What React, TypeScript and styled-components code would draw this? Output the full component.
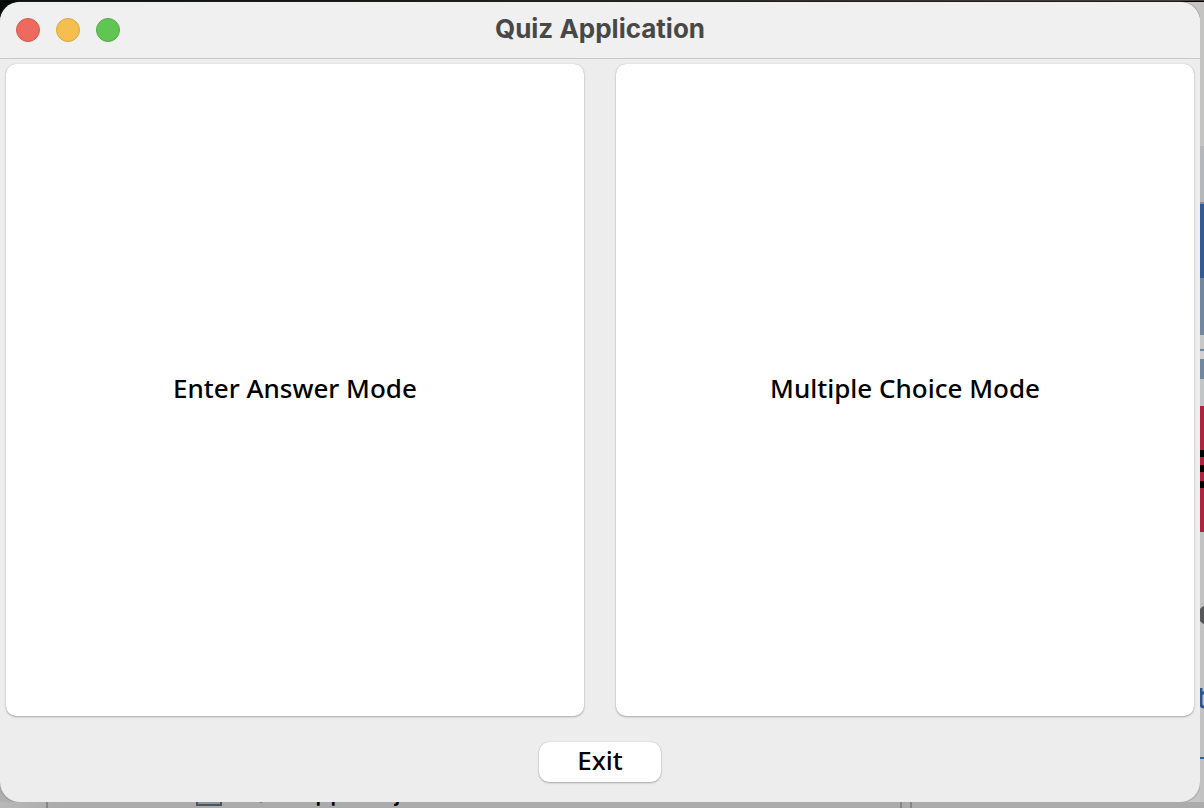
import React from "react";
import styled, { createGlobalStyle } from "styled-components";

const GlobalStyle = createGlobalStyle`
  *, *::before, *::after { box-sizing: border-box; }
  body { margin: 0; background: #b0b0b0; }
`;

const Desktop = styled.div`
  display: grid;
  grid-template-columns: minmax(0, 1fr) 4px;
  grid-template-rows: 2px minmax(0, 1fr) 6px;
  height: 100vh;
  overflow: hidden;
  background: linear-gradient(to bottom, #020b0a 0 40px, #bcbcbc 200px, #b0b0b0);
`;

const MenuBarEdge = styled.div`
  grid-column: 1 / -1;
  background: linear-gradient(to right, #03100f, #14150e 30%, #4b4236);
  border-bottom: 1px solid #000000;
`;

const WindowCell = styled.div`
  display: flex;
  min-width: 0;
  background: linear-gradient(to right, transparent 50%, #c6c7c4 50%);
`;

const Window = styled.main`
  flex: 1;
  display: flex;
  flex-direction: column;
  min-width: 0;
  overflow: hidden;
  border-radius: 20px;
  background: #ededed;
  box-shadow: 0 0 2px 0 #6e6e6e;
`;

const TitleBar = styled.header`
  display: grid;
  grid-template-columns: 1fr auto 1fr;
  align-items: center;
  height: 57px;
  padding: 0 16px;
  background: #f0f0f0;
  border-bottom: 1px solid #c8c8c8;
`;

const Controls = styled.div`
  display: flex;
  gap: 16px;
`;

const ControlButton = styled.button<{ $fill: string; $edge: string }>`
  width: 24px;
  height: 24px;
  padding: 0;
  border: 1px solid ${(p) => p.$edge};
  border-radius: 50%;
  background: ${(p) => p.$fill};
`;

const Title = styled.h1`
  margin: 0;
  padding-bottom: 2px;
  font: 700 26px/32px Inter, sans-serif;
  color: #484848;
`;

const Modes = styled.div`
  flex: 1;
  display: grid;
  grid-template-columns: 1fr 1fr;
  gap: 32px;
  padding: 5px 6px 0;
`;

const PushButton = styled.button`
  padding: 0 38px 4px;
  border: 0;
  border-radius: 10px;
  background: #ffffff;
  box-shadow: 0 0 1px 0 #a8a8a8, 0 1px 2px 0 #a8a8a8;
  color: #000000;
  font: 500 26px/36px "Noto Sans", sans-serif;
`;

const Footer = styled.footer`
  display: flex;
  justify-content: center;
  padding: 26px 0 20px;
`;

const SideApp = styled.div`
  display: flex;
  flex-direction: column;
  overflow: hidden;
`;

const Band = styled.div<{ $size: number; $color: string }>`
  flex: 0 0 ${(p) => p.$size}px;
  background: ${(p) => p.$color};
`;

const Drawing = styled.svg`
  display: block;
  flex: none;
`;

const FileRow = styled.div`
  grid-column: 1 / -1;
  display: flex;
  align-items: flex-end;
  overflow: hidden;
  padding-left: 46px;
  background: linear-gradient(to right, #b8b8b8, #ababab 60px);
`;

const FilePane = styled.div`
  flex: 0 0 856px;
  display: flex;
  align-items: flex-end;
  height: 6px;
  padding-left: 148px;
  border: solid #858585;
  border-width: 0 2px;
`;

const FileName = styled.span`
  padding-left: 22px;
  font: 500 24px/30px Inter, sans-serif;
  color: #000000;
  white-space: nowrap;
`;

const Splitter = styled.div`
  flex: 0 0 10px;
  height: 6px;
  border-right: 2px solid #858585;
`;

const upperBands: [number, string][] = [
  [144, "#c4c5c2"],
  [56, "#b4b7bc"],
  [2, "#8e8e8e"],
  [74, "#345a92"],
  [57, "#72869e"],
  [14, "#c8c8c8"],
  [2, "#72869e"],
  [8, "#d0d0d0"],
  [20, "#72869e"],
  [27, "#c2c5c6"],
  [44, "#ac2440"],
  [7, "#000000"],
  [8, "#ac2440"],
  [7, "#000000"],
  [9, "#ac2440"],
  [7, "#000000"],
  [44, "#ac2440"],
];

export default function App() {
  return (
    <>
      <GlobalStyle />
      <Desktop>
        <MenuBarEdge />
        <WindowCell>
          <Window>
            <TitleBar>
              <Controls>
                <ControlButton aria-label="Close" $fill="#ec6a5e" $edge="#d8584c" />
                <ControlButton aria-label="Minimize" $fill="#f4bf4f" $edge="#dba73c" />
                <ControlButton aria-label="Zoom" $fill="#61c554" $edge="#4fae43" />
              </Controls>
              <Title>Quiz Application</Title>
            </TitleBar>
            <Modes>
              <PushButton>Enter Answer Mode</PushButton>
              <PushButton>Multiple Choice Mode</PushButton>
            </Modes>
            <Footer>
              <PushButton>Exit</PushButton>
            </Footer>
          </Window>
        </WindowCell>
        <SideApp>
          {upperBands.map(([size, color], i) => (
            <Band key={i} $size={size} $color={color} />
          ))}
          <Drawing width="4" height="270" viewBox="0 0 4 270" aria-hidden="true">
            <rect width="4" height="270" fill="#c2c2c2" />
            <circle cx="8" cy="83" r="10" fill="#58595b" />
            <path d="M1 156V172Q1 175 4 175M0 161H4" fill="none" stroke="#2f5590" strokeWidth="3" />
            <rect y="225" width="4" height="2" fill="#34609c" />
          </Drawing>
        </SideApp>
        <FileRow>
          <FilePane>
            <Drawing width="28" height="6" viewBox="0 0 28 6" aria-hidden="true">
              <path d="M1 -2V3H25V-2" fill="#8b949b" stroke="#4b555c" strokeWidth="2" />
            </Drawing>
            <FileName>QuizAppGUI.java</FileName>
          </FilePane>
          <Splitter />
        </FileRow>
      </Desktop>
    </>
  );
}
